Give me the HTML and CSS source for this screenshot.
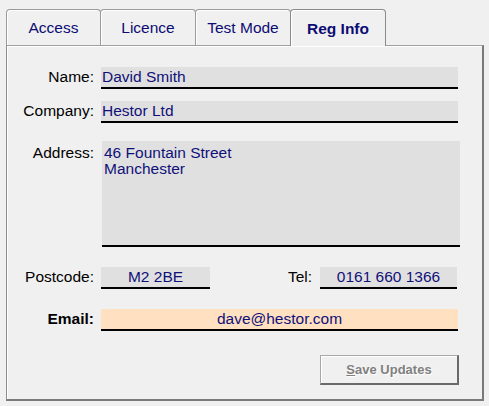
FILE: index.html
```html
<!DOCTYPE html>
<html>
<head>
<meta charset="utf-8">
<link rel="stylesheet" href="styles.css">
</head>
<body>
<div class="tabs">
  <div class="tab">Access</div>
  <div class="tab">Licence</div>
  <div class="tab">Test Mode</div>
  <div class="tab active">Reg Info</div>
</div>
<div class="panel">
  <div class="row row-name">
    <div class="label">Name:</div>
    <div class="field wide">David Smith</div>
  </div>
  <div class="row row-company">
    <div class="label">Company:</div>
    <div class="field wide">Hestor Ltd</div>
  </div>
  <div class="row row-address">
    <div class="label label-addr">Address:</div>
    <div class="field address">46 Fountain Street<br>Manchester</div>
  </div>
  <div class="row row-post">
    <div class="label">Postcode:</div>
    <div class="field center postcode">M2 2BE</div>
    <div class="label tel-label">Tel:</div>
    <div class="field center tel">0161 660 1366</div>
  </div>
  <div class="row row-email">
    <div class="label bold">Email:</div>
    <div class="field wide center email">dave@hestor.com</div>
  </div>
  <div class="row row-button">
    <button class="btn" disabled><u>S</u>ave Updates</button>
  </div>
</div>
</body>
</html>
```
FILE: styles.css
```css
* { box-sizing: border-box; }
html, body { margin: 0; }
body {
  background: #f0f0f0;
  font-family: "Liberation Sans", Arial, sans-serif;
  font-size: 15.5px;
  padding: 9px 0 0 6px;
  width: 489px;
  height: 406px;
  overflow: hidden;
}
.tabs {
  display: flex;
  height: 36px;
}
.tab {
  width: 96px;
  margin-left: -1px;
  height: 36px;
  border: 1px solid #9a9a9a;
  border-bottom: none;
  border-radius: 4px 4px 0 0;
  box-shadow: inset 1px 1px 0 #ffffff;
  display: flex;
  align-items: center;
  justify-content: center;
  color: #0c0c74;
  background: #f0f0f0;
  padding-top: 1px;
}
.tab:first-child { width: 95px; margin-left: 0; }
.tab.active {
  font-weight: bold;
  height: 37px;
  position: relative;
  z-index: 1;
  margin-bottom: -1px;
  border-color: #8a8a8a;
}
.panel {
  width: 478px;
  height: 356px;
  border-top: 1px solid #a0a0a0;
  border-left: 1px solid #8e8e8e;
  border-right: 2px solid #7a7a7a;
  border-bottom: 2px solid #7a7a7a;
  box-shadow: inset 1px 1px 0 #ffffff;
  padding-top: 21px;
  display: flex;
  flex-direction: column;
}
.row {
  display: flex;
  align-items: flex-start;
}
.row-company { margin-top: 12px; }
.row-address { margin-top: 18px; }
.row-post { margin-top: 20px; }
.row-email { margin-top: 20px; }
.row-button { margin-top: 24px; justify-content: flex-end; padding-right: 23px; }
.label {
  width: 87px;
  text-align: right;
  color: #000;
  line-height: 18px;
  padding-top: 1px;
  margin-right: 7px;
  white-space: nowrap;
}
.bold { font-weight: bold; }
.field {
  height: 22px;
  background: #e0e0e0;
  border-bottom: 2px solid #000;
  color: #10107a;
  line-height: 18px;
  padding: 1px 0 0 1px;
  white-space: nowrap;
}
.wide { width: 357px; }
.center { text-align: center; padding-left: 0; }
.email { background: #ffe0c0; }
.label-addr { line-height: 16px; padding-top: 4px; }
.address {
  margin-left: 1px;
  width: 358px;
  height: 106px;
  line-height: 16px;
  padding: 4px 0 0 2px;
  white-space: normal;
}
.postcode { width: 109px; }
.tel-label { flex: 1; width: auto; margin-right: 8px; }
.tel { width: 137px; margin-right: 25px; }
.btn {
  width: 139px;
  height: 30px;
  font-family: "Liberation Sans", Arial, sans-serif;
  font-size: 13px;
  font-weight: bold;
  color: #808080;
  background: #f0f0f0;
  border-top: 1px solid #a8a8a8;
  border-left: 1px solid #a8a8a8;
  border-right: 2px solid #6a6a6a;
  border-bottom: 2px solid #6a6a6a;
  box-shadow: inset 1px 1px 0 #ffffff;
  padding: 0;
  text-shadow: 1px 1px 0 #ffffff;
}
.btn u { text-decoration-thickness: 1px; }
```
